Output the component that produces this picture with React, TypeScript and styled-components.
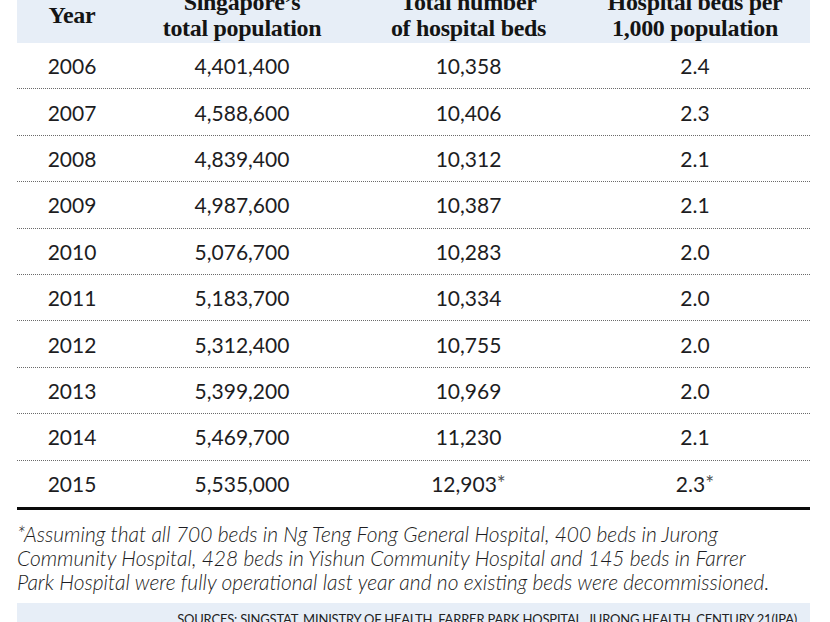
import React from "react";
import styled, { createGlobalStyle } from "styled-components";

const Global = createGlobalStyle`
  html, body { margin: 0; padding: 0; background: #ffffff; }
  body { overflow: hidden; }
`;

const Page = styled.div`
  width: 793px;
  padding-left: 17px;
  display: flex;
  flex-direction: column;
`;

const columns = "110px 230px 223px 230px";

const HeaderRow = styled.div`
  display: grid;
  grid-template-columns: ${columns};
  align-items: center;
  background: #e7eef7;
  margin-top: -19px;
  padding: 8px 0 2px;
  font-family: "Liberation Serif", "Times New Roman", serif;
  font-weight: 700;
  font-size: 24px;
  line-height: 26px;
  color: #141414;
  letter-spacing: -0.3px;
`;

const HeadCell = styled.div`
  text-align: center;
`;

const Row = styled.div<{ $last?: boolean }>`
  display: grid;
  grid-template-columns: ${columns};
  align-items: center;
  height: ${(p) => (p.$last ? "46.4px" : "45.4px")};
  border-bottom: ${(p) => (p.$last ? "3px solid #0a0a0a" : "1px dotted #6b6b6b")};
  font-family: Lato, "Open Sans", sans-serif;
  font-size: 21px;
  color: #1d1d1f;
`;

const Cell = styled.div`
  text-align: center;
`;

const Star = styled.span`
  font-size: 21px;
  line-height: 0;
  vertical-align: 1px;
  color: #555;
`;

const Footnote = styled.p`
  margin: 12px 0 0;
  font-family: Lato, "Open Sans", sans-serif;
  font-style: italic;
  font-weight: 300;
  font-size: 21px;
  line-height: 24px;
  color: #1d1d22;
  white-space: nowrap;
`;

const Sources = styled.div`
  margin-top: 9px;
  background: #e7eef7;
  height: 30px;
  padding: 8px 13px 0 0;
  text-align: right;
  font-family: Lato, "Open Sans", sans-serif;
  font-size: 13px;
  color: #222;
  text-transform: uppercase;
  letter-spacing: -0.2px;
`;

type Rec = { year: string; pop: string; beds: string; rate: string; star?: boolean };

const data: Rec[] = [
  { year: "2006", pop: "4,401,400", beds: "10,358", rate: "2.4" },
  { year: "2007", pop: "4,588,600", beds: "10,406", rate: "2.3" },
  { year: "2008", pop: "4,839,400", beds: "10,312", rate: "2.1" },
  { year: "2009", pop: "4,987,600", beds: "10,387", rate: "2.1" },
  { year: "2010", pop: "5,076,700", beds: "10,283", rate: "2.0" },
  { year: "2011", pop: "5,183,700", beds: "10,334", rate: "2.0" },
  { year: "2012", pop: "5,312,400", beds: "10,755", rate: "2.0" },
  { year: "2013", pop: "5,399,200", beds: "10,969", rate: "2.0" },
  { year: "2014", pop: "5,469,700", beds: "11,230", rate: "2.1" },
  { year: "2015", pop: "5,535,000", beds: "12,903", rate: "2.3", star: true },
];

export default function App() {
  return (
    <>
      <Global />
      <Page>
        <HeaderRow>
          <HeadCell>Year</HeadCell>
          <HeadCell>
            Singapore’s
            <br />
            total population
          </HeadCell>
          <HeadCell>
            Total number
            <br />
            of hospital beds
          </HeadCell>
          <HeadCell>
            Hospital beds per
            <br />
            1,000 population
          </HeadCell>
        </HeaderRow>
        {data.map((r, i) => (
          <Row key={r.year} $last={i === data.length - 1}>
            <Cell>{r.year}</Cell>
            <Cell>{r.pop}</Cell>
            <Cell>
              {r.beds}
              {r.star && <Star>*</Star>}
            </Cell>
            <Cell>
              {r.rate}
              {r.star && <Star>*</Star>}
            </Cell>
          </Row>
        ))}
        <Footnote>
          *Assuming that all 700 beds in Ng Teng Fong General Hospital, 400 beds in Jurong
          <br />
          Community Hospital, 428 beds in Yishun Community Hospital and 145 beds in Farrer
          <br />
          Park Hospital were fully operational last year and no existing beds were decommissioned.
        </Footnote>
        <Sources>
          Sources: Singstat, Ministry of Health, Farrer Park Hospital, Jurong Health, Century 21(IPA)
        </Sources>
      </Page>
    </>
  );
}
